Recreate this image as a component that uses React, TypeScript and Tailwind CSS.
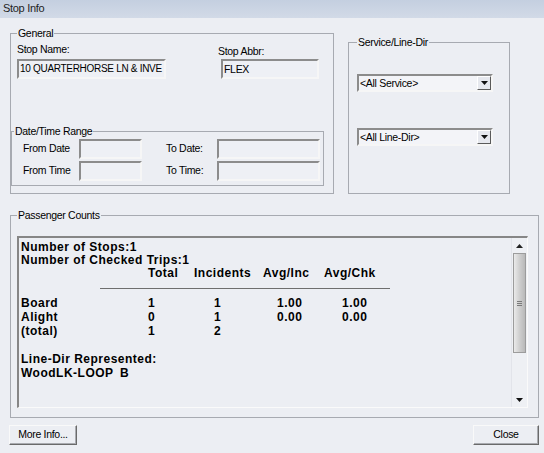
import React from "react";

const FONT = { fontFamily: '"Liberation Sans", Arial, sans-serif' };

function Sunken({ className, children }: { className: string; children?: React.ReactNode }) {
  return (
    <div
      className={`overflow-hidden whitespace-nowrap border-2 border-t-[#8c8c8c] border-l-[#8c8c8c] border-b-[#f6f6f6] border-r-[#f6f6f6] bg-[#eef0f5] leading-[16px] text-black pl-[1px] ${className}`}
    >
      {children}
    </div>
  );
}

function Legend({ children, className }: { children: React.ReactNode; className: string }) {
  return (
    <div
      className={`-mt-[7px] w-fit bg-[#eceef3] px-[1px] text-[10.5px] tracking-[-0.3px] leading-[13px] text-black ${className}`}
    >
      {children}
    </div>
  );
}

function Arrow({ up }: { up?: boolean }) {
  return (
    <svg width="7" height="4" viewBox="0 0 7 4">
      {up ? <path d="M0 4 L3.5 0 L7 4 Z" fill="#222" /> : <path d="M0 0 L7 0 L3.5 4 Z" fill="#111" />}
    </svg>
  );
}

function Dropdown({ text, className }: { text: string; className: string }) {
  return (
    <div
      className={`flex border-2 border-t-[#8c8c8c] border-l-[#8c8c8c] border-b-[#f6f6f6] border-r-[#f6f6f6] bg-[#f3f4f8] ${className}`}
    >
      <div className="flex-1 whitespace-nowrap pl-[1px] text-[10.5px] tracking-[-0.3px] leading-[14px] text-black">{text}</div>
      <div className="flex h-[14px] w-[14px] items-center justify-center border border-t-[#ffffff] border-l-[#ffffff] border-b-[#5a5a5a] border-r-[#5a5a5a] bg-[#e6e8ee]">
        <Arrow />
      </div>
    </div>
  );
}

function Button({ label, className }: { label: string; className: string }) {
  return (
    <div
      className={`flex h-[20px] items-center justify-center border border-t-[#f9f9f9] border-l-[#f9f9f9] border-b-[#6a6a6a] border-r-[#6a6a6a] shadow-[inset_-1px_-1px_0_#a9abb0] text-[10.5px] tracking-[-0.3px] text-black ${className}`}
    >
      {label}
    </div>
  );
}

function Row({
  label,
  total,
  inc,
  avgInc,
  avgChk,
}: {
  label: string;
  total: string;
  inc: string;
  avgInc?: string;
  avgChk?: string;
}) {
  return (
    <div className="flex h-[14px] leading-[14px]">
      <div className="w-[127px]">{label}</div>
      <div className="w-[46px]">{total}</div>
      <div className="w-[69px] pl-[20px]">{inc}</div>
      <div className="w-[61px] pl-[14px]">{avgInc}</div>
      <div className="pl-[18px]">{avgChk}</div>
    </div>
  );
}

export default function App() {
  return (
    <div className="flex h-[453px] w-[544px] flex-col overflow-hidden bg-[#eceef3]" style={FONT}>
      {/* title bar */}
      <div className="h-[18px] bg-gradient-to-b from-[#c4cfe0] to-[#d2dae7] pl-[3px] text-[11px] leading-[17px] tracking-[-0.3px] text-[#1e1e1e]">
        Stop Info
      </div>

      {/* top row */}
      <div className="flex items-start pl-[10px]">
        {/* General */}
        <div className="mt-[15px] h-[161px] w-[324px] border border-[#a7aab1]">
          <Legend className="ml-[6px]">General</Legend>
          <div className="flex">
            <div className="ml-[6px] flex flex-col">
              <div className="mt-[3px] text-[10.5px] tracking-[-0.3px] leading-[13px] text-black">Stop Name:</div>
              <Sunken className="mt-[3px] h-[20px] w-[149px] text-[10px] tracking-[-0.3px]">10 QUARTERHORSE LN &amp; INVE</Sunken>
            </div>
            <div className="ml-[52px] flex flex-col">
              <div className="mt-[5px] text-[10.5px] tracking-[-0.3px] leading-[13px] text-black">Stop Abbr:</div>
              <Sunken className="ml-[3px] mt-[1px] h-[20px] w-[98px] text-[10.5px] tracking-[-0.3px]">FLEX</Sunken>
            </div>
          </div>

          {/* Date/Time Range */}
          <div className="mt-[52px] h-[55px] w-[313px] border border-[#a7aab1]">
            <Legend className="ml-[2px]">Date/Time Range</Legend>
            <div className="mt-[1px] flex h-[20px] items-center">
              <div className="ml-[11px] w-[56px] text-[10.5px] tracking-[-0.3px] text-black">From Date</div>
              <Sunken className="h-[20px] w-[63px]" />
              <div className="ml-[24px] w-[51px] text-[10.5px] tracking-[-0.3px] text-black">To Date:</div>
              <Sunken className="h-[20px] w-[103px]" />
            </div>
            <div className="mt-[2px] flex h-[20px] items-center">
              <div className="ml-[11px] w-[56px] text-[10.5px] tracking-[-0.3px] text-black">From Time</div>
              <Sunken className="h-[20px] w-[63px]" />
              <div className="ml-[24px] w-[51px] text-[10.5px] tracking-[-0.3px] text-black">To Time:</div>
              <Sunken className="h-[20px] w-[103px]" />
            </div>
          </div>
        </div>

        {/* Service/Line-Dir */}
        <div className="ml-[14px] mt-[24px] h-[152px] w-[162px] border border-[#a7aab1]">
          <Legend className="ml-[8px]">Service/Line-Dir</Legend>
          <Dropdown className="ml-[8px] mt-[25px] h-[18px] w-[136px]" text="<All Service>" />
          <Dropdown className="ml-[8px] mt-[36px] h-[18px] w-[136px]" text="<All Line-Dir>" />
        </div>
      </div>

      {/* Passenger Counts */}
      <div className="ml-[10px] mt-[21px] h-[203px] w-[529px] border border-[#a7aab1]">
        <Legend className="ml-[6px]">Passenger Counts</Legend>
        <div className="ml-[6px] mt-[14px] flex h-[172px] w-[511px] border-b border-l-2 border-r border-t-2 border-b-[#fafafa] border-l-[#868686] border-r-[#fafafa] border-t-[#868686]">
          <div className="flex-1 pl-[2px] pt-[3px] text-[12px] font-bold tracking-[0.5px] text-black">
            <div className="h-[13px] leading-[13px]">Number of Stops:1</div>
            <div className="h-[13px] leading-[13px]">Number of Checked Trips:1</div>
            <div className="flex h-[13px] leading-[13px]">
              <div className="w-[127px]" />
              <div className="w-[46px]">Total</div>
              <div className="w-[69px]">Incidents</div>
              <div className="w-[61px]">Avg/Inc</div>
              <div>Avg/Chk</div>
            </div>
            <div className="ml-[79px] mt-[8px] h-[1px] w-[290px] bg-[#6e6e6e]" />
            <div className="mt-[7px]">
              <Row label="Board" total="1" inc="1" avgInc="1.00" avgChk="1.00" />
              <Row label="Alight" total="0" inc="1" avgInc="0.00" avgChk="0.00" />
              <Row label="(total)" total="1" inc="2" />
              <div className="h-[14px]" />
              <div className="h-[14px] leading-[14px]">Line-Dir Represented:</div>
              <div className="flex h-[14px] leading-[14px]">
                <div className="w-[99px]">WoodLK-LOOP</div>
                <div>B</div>
              </div>
            </div>
          </div>

          {/* scrollbar */}
          <div className="flex w-[16px] flex-col border-l border-[#e2e4ea] bg-[#eef0f4]">
            <div className="flex h-[15px] items-center justify-center">
              <Arrow up />
            </div>
            <div className="mx-[1px] flex h-[100px] items-center justify-center border border-[#9c9c9c] bg-gradient-to-r from-[#eaeaea] via-[#cfcfcf] to-[#b9b9b9]">
              <div className="flex flex-col gap-[1px]">
                <div className="h-[1px] w-[5px] bg-[#7a7a7a]" />
                <div className="h-[1px] w-[5px] bg-[#7a7a7a]" />
                <div className="h-[1px] w-[5px] bg-[#7a7a7a]" />
              </div>
            </div>
            <div className="flex-1" />
            <div className="flex h-[15px] items-center justify-center">
              <Arrow />
            </div>
          </div>
        </div>
      </div>

      {/* buttons */}
      <div className="mt-[7px] flex justify-between pl-[9px] pr-[5px]">
        <Button className="w-[68px]" label="More Info..." />
        <Button className="w-[66px]" label="Close" />
      </div>
    </div>
  );
}
